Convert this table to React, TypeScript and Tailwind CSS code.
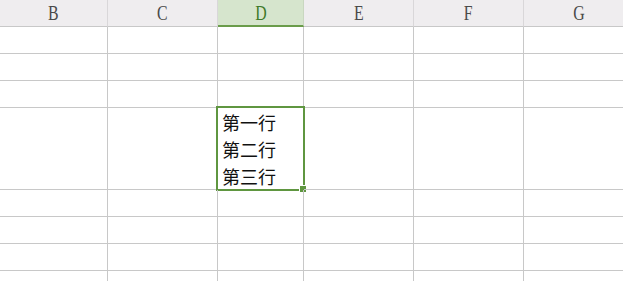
import React from 'react';

const cols = [
    { name: 'B', w: 'w-[108px]' },
    { name: 'C', w: 'w-[110px]' },
    { name: 'D', w: 'w-[86px]' },
    { name: 'E', w: 'w-[110px]' },
    { name: 'F', w: 'w-[110px]' },
    { name: 'G', w: 'w-[110px]' },
];

// row heights incl. the bottom gridline
const rows = ['h-[27px]', 'h-[27px]', 'h-[27px]', 'h-[82px]', 'h-[27px]', 'h-[27px]', 'h-[27px]', 'h-[27px]'];

const App: React.FC = () => {
    return (
        <div className="w-[623px] h-[281px] overflow-hidden bg-white" style={{ fontFamily: '"Noto Sans CJK SC", sans-serif' }}>
            <div className="flex w-max">
                {cols.map((c) => {
                    const active = c.name === 'D';
                    return (
                        <div
                            key={c.name}
                            className={`${c.w} shrink-0 h-[27px] flex items-center justify-center border-r border-b ${active ? 'bg-[#d6e5cd] border-r-[#c9d7c0] border-b-2 border-b-[#6a9c4a]' : 'bg-[#efedef] border-r-[#d9d7d9] border-b-[#c8c8c8]'}`}
                        >
                            <span
                                className={`inline-block text-[22px] leading-none scale-x-[0.72] ${active ? 'text-[#3f7a2a]' : 'text-[#4a4a4a]'}`}
                                style={{ fontFamily: '"Liberation Serif", serif' }}
                            >
                                {c.name}
                            </span>
                        </div>
                    );
                })}
            </div>

            {rows.map((h, r) => (
                <div key={r} className="flex w-max">
                    {cols.map((c) => {
                        const selected = r === 3 && c.name === 'D';
                        return (
                            <div key={c.name} className={`${c.w} ${h} shrink-0 border-r border-b border-[#c8c8c8] relative`}>
                                {selected && (
                                    <>
                                        <div className="pl-[4px] pt-[1px] text-[18px] leading-[27px] text-[#111111]">
                                            <div>第一行</div>
                                            <div>第二行</div>
                                            <div>第三行</div>
                                        </div>
                                        <div className="absolute -left-[2px] -top-[2px] w-[89px] h-[85px] border-[2px] border-[#5f9640]" />
                                        <div className="absolute left-[82px] top-[78px] w-[6px] h-[6px] bg-[#5f9640] outline outline-1 outline-white" />
                                    </>
                                )}
                            </div>
                        );
                    })}
                </div>
            ))}
        </div>
    );
};

export default App;
